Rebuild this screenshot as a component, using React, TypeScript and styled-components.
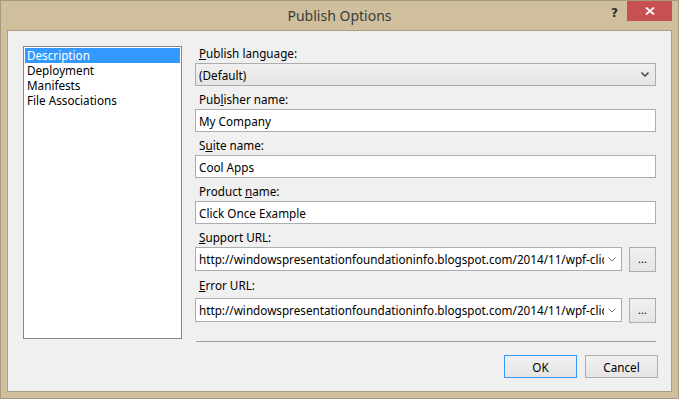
import React from "react";
import styled, { createGlobalStyle } from "styled-components";

const Global = createGlobalStyle`
  html, body { margin: 0; padding: 0; background: #ffffff; }
  body { font-family: "Noto Sans", "Open Sans", sans-serif; }
  * { box-sizing: border-box; }
`;

const UI_FONT = `"Noto Sans", "Open Sans", sans-serif`;

const Window = styled.div`
  width: 679px;
  height: 399px;
  background: #cfbf9c;
  border: 1px solid #a59a7e;
  display: flex;
  flex-direction: column;
  font-family: ${UI_FONT};
  font-size: 11.7px;
  color: #000;
`;

const TitleBar = styled.div`
  height: 29px;
  display: grid;
  grid-template-columns: 1fr auto 1fr;
  align-items: start;
`;

const Title = styled.div`
  grid-column: 2;
  font-size: 14px;
  line-height: 20px;
  margin-top: 5px;
  color: #3b3b3b;
`;

const Controls = styled.div`
  grid-column: 3;
  justify-self: end;
  display: flex;
  align-items: flex-start;
  margin-right: 6px;
`;

const HelpGlyph = styled.div`
  font-family: "DejaVu Sans", sans-serif;
  font-weight: bold;
  font-size: 12px;
  line-height: 14px;
  color: #2a2a2a;
  margin-top: 5px;
  margin-right: 9px;
`;

const CloseButton = styled.div`
  width: 45px;
  height: 20px;
  background: #c75050;
  display: flex;
  align-items: center;
  justify-content: center;
`;

const Client = styled.div`
  flex: 1;
  margin: 0 6px 6px 6px;
  border: 1px solid #ab9f83;
  background: #f0f0f0;
  display: flex;
  padding: 0 0 0 15px;
`;

const ListBox = styled.div`
  width: 159px;
  height: 293px;
  margin-top: 15px;
  background: #fff;
  border: 1px solid #828790;
  padding: 1px;
  display: flex;
  flex-direction: column;
`;

const ListItem = styled.div<{ $selected?: boolean }>`
  height: 15px;
  line-height: 15px;
  padding-left: 2px;
  white-space: nowrap;
  background: ${(p) => (p.$selected ? "#3399ff" : "transparent")};
  color: ${(p) => (p.$selected ? "#fff" : "#000")};
`;

const RightPane = styled.div`
  width: 463px;
  margin-left: 13px;
  padding-top: 9px;
  display: flex;
  flex-direction: column;
`;

const Fields = styled.div`
  width: 461px;
  display: flex;
  flex-direction: column;
`;

const Label = styled.div<{ $h?: number }>`
  height: ${(p) => p.$h ?? 23}px;
  padding: 5px 0 0 4px;
  line-height: 16px;
  white-space: nowrap;
`;

const ComboBox = styled.div`
  height: 23px;
  border: 1px solid #acacac;
  background: linear-gradient(#f0f0f0, #e5e5e5);
  display: flex;
  align-items: center;
  padding: 0 6px 0 3px;
  line-height: 16px;
`;

const TextBox = styled.div`
  height: 23px;
  border: 1px solid #abadb3;
  background: #fff;
  display: flex;
  align-items: center;
  padding: 0 3px;
  line-height: 16px;
  white-space: nowrap;
`;

const Grow = styled.span`
  flex: 1;
  min-width: 0;
  overflow: hidden;
  white-space: nowrap;
  text-overflow: clip;
`;

const UrlRow = styled.div`
  height: 25px;
  display: flex;
  align-items: flex-start;
  gap: 7px;
`;

const EditCombo = styled.div`
  width: 427px;
  height: 24px;
  border: 1px solid #abadb3;
  background: #fff;
  display: flex;
  align-items: center;
  gap: 4px;
  padding: 0 5px 0 3px;
  line-height: 16px;
`;

const Dots = styled.div`
  width: 27px;
  height: 25px;
  border: 1px solid #acacac;
  background: linear-gradient(#f0f0f0, #e5e5e5);
  display: flex;
  align-items: center;
  justify-content: center;
  padding-bottom: 2px;
  font-size: 11px;
`;

const Separator = styled.div`
  width: 460px;
  margin-left: 1px;
  margin-top: 18px;
  height: 1px;
  background: #a0a0a0;
`;

const Footer = styled.div`
  display: flex;
  justify-content: flex-end;
  gap: 8px;
  margin-top: 13px;
`;

const Button = styled.div<{ $default?: boolean }>`
  width: 73px;
  height: 23px;
  border: 1px solid ${(p) => (p.$default ? "#3399ff" : "#adadad")};
  background: linear-gradient(#f0f0f0, #e5e5e5);
  display: flex;
  align-items: center;
  justify-content: center;
  line-height: 16px;
`;

const Chevron = ({ color = "#555", thin = false }: { color?: string; thin?: boolean }) => (
  <svg width="8" height="5" viewBox="0 0 8 5" style={{ flexShrink: 0 }}>
    <path
      d="M0.5 0.5 L4 4 L7.5 0.5"
      fill="none"
      stroke={color}
      strokeWidth={thin ? 1 : 1.6}
    />
  </svg>
);

const CloseIcon = () => (
  <svg width="10" height="8" viewBox="0 0 10 8">
    <path d="M1 0.5 L9 7.5 M9 0.5 L1 7.5" stroke="#fff" strokeWidth="1.8" />
  </svg>
);

const url = "http://windowspresentationfoundationinfo.blogspot.com/2014/11/wpf-clickonce-publish-options.html";

export default function App() {
  return (
    <>
      <Global />
      <Window>
        <TitleBar>
          <Title>Publish Options</Title>
          <Controls>
            <HelpGlyph>?</HelpGlyph>
            <CloseButton>
              <CloseIcon />
            </CloseButton>
          </Controls>
        </TitleBar>
        <Client>
          <ListBox>
            <ListItem $selected>Description</ListItem>
            <ListItem>Deployment</ListItem>
            <ListItem>Manifests</ListItem>
            <ListItem>File Associations</ListItem>
          </ListBox>
          <RightPane>
            <Fields>
              <Label>
                <u>P</u>ublish language:
              </Label>
              <ComboBox>
                <Grow>(Default)</Grow>
                <Chevron />
              </ComboBox>
              <Label>
                Pub<u>l</u>isher name:
              </Label>
              <TextBox>My Company</TextBox>
              <Label>
                S<u>u</u>ite name:
              </Label>
              <TextBox>Cool Apps</TextBox>
              <Label>
                Product <u>n</u>ame:
              </Label>
              <TextBox>Click Once Example</TextBox>
              <Label>
                <u>S</u>upport URL:
              </Label>
              <UrlRow>
                <EditCombo>
                  <Grow>{url}</Grow>
                  <Chevron color="#6b7a8c" thin />
                </EditCombo>
                <Dots>...</Dots>
              </UrlRow>
              <Label $h={26}>
                <u>E</u>rror URL:
              </Label>
              <UrlRow>
                <EditCombo>
                  <Grow>{url}</Grow>
                  <Chevron color="#6b7a8c" thin />
                </EditCombo>
                <Dots>...</Dots>
              </UrlRow>
            </Fields>
            <Separator />
            <Footer>
              <Button $default>OK</Button>
              <Button>Cancel</Button>
            </Footer>
          </RightPane>
        </Client>
      </Window>
    </>
  );
}
